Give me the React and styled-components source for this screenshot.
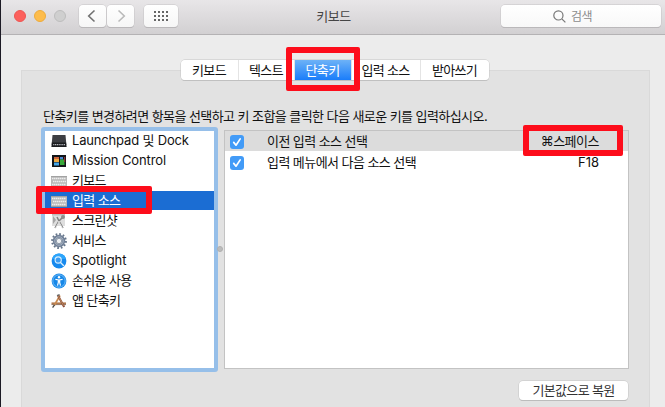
import React from "react";
import styled, { createGlobalStyle } from "styled-components";

const Global = createGlobalStyle`
  * { box-sizing: border-box; }
  body {
    margin: 0;
    overflow: hidden;
    font-family: Inter, "Noto Sans CJK KR", sans-serif;
    font-size: 13px;
    color: #111;
  }
`;

const Window = styled.div`
  width: 665px;
  height: 407px;
  overflow: hidden;
  background: #ececec;
  border-left: 1px solid #1c1a24;
`;

const Toolbar = styled.header`
  height: 35px;
  padding: 5px 4px 0 13px;
  display: flex;
  align-items: flex-start;
  background: linear-gradient(#e8e6e8, #d2d0d2);
  border-bottom: 1px solid #b4b2b4;
`;

const Lights = styled.div`
  display: flex;
  gap: 8px;
  margin: 5px 13px 0 0;
`;

const Light = styled.span`
  width: 12px;
  height: 12px;
  border-radius: 50%;
  background: ${(p) => p.$fill};
  border: 1px solid ${(p) => p.$edge};
`;

const ToolButton = styled.button`
  width: ${(p) => p.$width}px;
  height: 22px;
  margin-right: ${(p) => p.$after}px;
  padding: 0;
  display: flex;
  align-items: center;
  justify-content: center;
  border: 0;
  border-radius: 4px;
  background: linear-gradient(#fff, #f6f6f6);
  box-shadow: 0 0 0 0.5px #c6c4c6, 0 1px 0 #aeacae;
`;

const Title = styled.div`
  flex: 1;
  padding-right: 7px;
  text-align: center;
  line-height: 23px;
  letter-spacing: -0.4px;
  color: #454545;
`;

const Search = styled.div`
  width: 160px;
  height: 22px;
  display: flex;
  align-items: center;
  justify-content: center;
  gap: 5px;
  padding-right: 17px;
  border-radius: 4px;
  background: linear-gradient(#fff, #f8f8f8);
  box-shadow: 0 0 0 0.5px #c6c4c6, 0 1px 0 #aeacae;
  color: #8c8c8c;
  font-size: 12px;
  line-height: 22px;
  letter-spacing: -0.6px;
`;

const SearchLabel = styled.span`
  padding-top: 2px;
`;

const Panel = styled.main`
  position: relative;
  width: 629px;
  height: 345px;
  margin: 35px 0 0 20px;
  padding: 0 20px;
  background: #e2e2e2;
  border: 1px solid #d9d9d9;
`;

const Tabs = styled.nav`
  width: 308px;
  height: 20px;
  margin: -11px 0 0 139px;
  display: flex;
  gap: 1px;
  overflow: hidden;
  border-radius: 4px;
  background: #e4e4e4;
  box-shadow: 0 0 0 0.5px #c4c4c4, 0 1px 0 #bdbdbd;
`;

const Tab = styled.div`
  width: ${(p) => p.$width}px;
  padding-right: 1px;
  line-height: 21px;
  text-align: center;
  letter-spacing: -0.65px;
  color: ${(p) => (p.$active ? "#fff" : "#111")};
  background: ${(p) => (p.$active ? "linear-gradient(#6db2f7, #1a7dfa)" : "#fff")};
`;

const Hint = styled.p`
  margin: 25px 0 0 1px;
  height: 22px;
  line-height: 22px;
  white-space: nowrap;
  letter-spacing: -0.57px;
`;

const Columns = styled.div`
  display: flex;
  align-items: flex-start;
`;

const List = styled.ul`
  width: 177px;
  height: 245px;
  margin: 0 6px 0 -1px;
  padding: 0;
  list-style: none;
  border: 4px solid #96bfe9;
  border-radius: 3px;
  background: #fff;
`;

const Item = styled.li`
  height: ${(p) => (p.$selected ? 19 : 20)}px;
  margin-bottom: ${(p) => (p.$selected ? 1 : 0)}px;
  padding-left: 6px;
  display: flex;
  align-items: center;
  gap: 5px;
  line-height: 20px;
  white-space: nowrap;
  color: ${(p) => (p.$selected ? "#fff" : "#111")};
  background: ${(p) => (p.$selected ? "#1b6dd3" : "transparent")};
`;

const ItemLabel = styled.span`
  margin-top: -2px;
  letter-spacing: ${(p) => p.$tracking}px;
`;

const Table = styled.div`
  width: 405px;
  height: 239px;
  margin-top: 3px;
  background: #fff;
  border: 1px solid #c3c3c3;
`;

const Row = styled.div`
  height: ${(p) => (p.$shaded ? 20 : 22)}px;
  padding: 0 29px 0 5px;
  display: flex;
  align-items: center;
  line-height: 20px;
  background: ${(p) => (p.$shaded ? "#dcdcdc" : "#fff")};
`;

const Check = styled.span`
  width: 14px;
  height: 14px;
  margin: 2px 23px 0 0;
  display: flex;
  border-radius: 3px;
  background: #429bf7;
`;

const Action = styled.span`
  flex: 1;
  letter-spacing: -0.57px;
`;

const Keys = styled.span`
  letter-spacing: ${(p) => p.$tracking}px;
`;

const Restore = styled.button`
  width: 109px;
  height: 19px;
  margin: 9px 0 0 477px;
  padding: 0;
  display: block;
  border: 0;
  border-radius: 4px;
  background: #fff;
  box-shadow: 0 0 0 0.5px #c4c4c4, 0 1px 0 #b5b5b5;
  font: inherit;
  line-height: 19px;
  letter-spacing: -0.65px;
  color: #333;
`;

const SplitDot = styled.span`
  position: absolute;
  left: 195px;
  top: 175px;
  width: 6px;
  height: 6px;
  border-radius: 50%;
  background: #bcbcbc;
  border: 1px solid #b0b0b0;
`;

const Highlight = styled.span`
  position: absolute;
  left: ${(p) => p.$x}px;
  top: ${(p) => p.$y}px;
  width: ${(p) => p.$w}px;
  height: ${(p) => p.$h}px;
  border: 6px solid #fd0d1b;
  border-radius: 2px;
`;

const Glyph = styled.svg`
  display: block;
  flex: none;
`;

const Keyboard = () => (
  <>
    <rect x="0" y="3" width="16" height="11" fill="#b9b9b9" />
    <rect x="0" y="3" width="16" height="1" fill="#a2a2a2" />
    <path d="M1 5.5h14M2 8.5h13M1 11.5h14" stroke="#ededed" strokeWidth="1.6" strokeDasharray="1.5 .5" />
    <path d="M0 13.5h16" stroke="#9c9c9c" />
  </>
);

const art = {
  launchpad: (
    <>
      <path d="M1.5 2h13l.9 10H.6z" fill="#3d3e43" />
      <path d="M.9 9.5h14.2l.5 4.5H.4z" fill="#1b1c1f" />
      <path d="M2.2 11.6h11.8" stroke="#b8bac0" strokeWidth="1.2" strokeDasharray="1.2 .6" />
    </>
  ),
  mission: (
    <>
      <rect x="1" y="2" width="14" height="12" fill="#111418" />
      <rect x="3" y="4" width="5" height="2" fill="#c9623c" />
      <rect x="3" y="6" width="5" height="3" fill="#eea940" />
      <rect x="3" y="9.5" width="5" height="3" fill="#46a6e7" />
      <rect x="9" y="4" width="3" height="2.5" fill="#4a84d1" />
      <rect x="9" y="6.5" width="4.5" height="5.5" fill="#38a83a" />
      <rect x="13" y="4" width="1.2" height="5" fill="#8f3438" />
    </>
  ),
  keyboard: <Keyboard />,
  screenshot: (
    <>
      <rect x="1" y="1" width="13" height="12" fill="#dedede" />
      <path d="M1 1h13v1.5H1z" fill="#bdbdbd" />
      <path d="M2 3l3 4-3 4z" fill="#a5a5a5" />
      <path d="M6 4l2 4 4 7M12 4L8 8l-4 7" stroke="#808080" strokeWidth="1.5" fill="none" />
      <path d="M7.4 8l4 7M8.6 8l-4 7" stroke="#f0f0f0" strokeWidth=".8" />
      <circle cx="12" cy="4" r="2" fill="#8d8d8d" />
    </>
  ),
  gear: (
    <>
      <circle cx="8" cy="8" r="6.8" fill="none" stroke="#66768b" strokeWidth="2.2" strokeDasharray="1.7 1.86" />
      <circle cx="8" cy="8" r="4.6" fill="none" stroke="#718097" strokeWidth="3.2" />
      <circle cx="8" cy="8" r="4.2" fill="none" stroke="#a9b6c5" strokeWidth="1" />
      <circle cx="8" cy="8" r="2.7" fill="#eef1f4" stroke="#66758a" strokeWidth=".7" />
    </>
  ),
  spotlight: (
    <>
      <circle cx="8" cy="8" r="7.4" fill="#1689ee" />
      <path d="M1 6a7.2 7.2 0 0 1 14 0z" fill="#2da5fb" />
      <circle cx="7.2" cy="7" r="3.1" fill="#3b9cf2" stroke="#d9efff" strokeWidth="1.1" />
      <path d="M9.5 9.4l3 3" stroke="#d9efff" strokeWidth="1.4" strokeLinecap="round" />
    </>
  ),
  access: (
    <>
      <circle cx="8" cy="8" r="7.4" fill="#1687e8" />
      <circle cx="8" cy="8" r="6.2" fill="none" stroke="#84c5f8" strokeWidth=".8" />
      <circle cx="8" cy="4.2" r="1.2" fill="#fff" />
      <path d="M4.4 6.4L8 7l3.6-.6M8 6.8v2.4M7.3 7v2.6L6.5 12.6M8.7 7v2.6l.8 3" stroke="#fff" strokeWidth="1.2" fill="none" />
    </>
  ),
  apps: (
    <>
      <path d="M.5 10.4h14.5" stroke="#b17a50" strokeWidth="2" />
      <path d="M.5 11.6h14.5" stroke="#6d5140" strokeWidth=".7" />
      <path d="M9 2.5L3.2 12.5" stroke="#c98a50" strokeWidth="1.7" />
      <path d="M3.5 11.8L1.6 14.6" stroke="#444" strokeWidth="1.2" />
      <path d="M7 2.5l6.2 11.5" stroke="#8c4a38" strokeWidth="2" />
      <path d="M7.4 3.2l5.2 9.5" stroke="#d3ad74" strokeWidth=".7" />
      <path d="M6 2.6l2.6-1" stroke="#666" strokeWidth="1.3" />
    </>
  ),
};

const items = [
  ["launchpad", "Launchpad 및 Dock", -0.17],
  ["mission", "Mission Control", -0.12],
  ["keyboard", "키보드", -0.65],
  ["keyboard", "입력 소스", -0.65],
  ["screenshot", "스크린샷", -0.75],
  ["gear", "서비스", -0.65],
  ["spotlight", "Spotlight", 0],
  ["access", "손쉬운 사용", -0.65],
  ["apps", "앱 단축키", -0.65],
];

const tabs = [
  ["키보드", 57],
  ["텍스트", 55],
  ["단축키", 56],
  ["입력 소스", 68],
  ["받아쓰기", 68],
];

const shortcuts = [
  ["이전 입력 소스 선택", "⌘스페이스", -0.5],
  ["입력 메뉴에서 다음 소스 선택", "F18", 0],
];

export default function App() {
  return (
    <>
      <Global />
      <Window>
        <Toolbar>
          <Lights>
            <Light $fill="#fc605c" $edge="#ee5552" />
            <Light $fill="#fdbc4b" $edge="#edab3c" />
            <Light $fill="#cfcfcf" $edge="#bdbdbd" />
          </Lights>
          <ToolButton $width={27} $after={1}>
            <Glyph width="27" height="22" fill="none" stroke="#727272" strokeWidth="1.6">
              <path d="M15.5 5.5L9.7 11l5.8 5.5" />
            </Glyph>
          </ToolButton>
          <ToolButton $width={27} $after={10}>
            <Glyph width="27" height="22" fill="none" stroke="#bababa" strokeWidth="1.6">
              <path d="M11.5 5.5l5.8 5.5-5.8 5.5" />
            </Glyph>
          </ToolButton>
          <ToolButton $width={34} $after={-5}>
            <Glyph width="34" height="22" fill="#666">
              {[6, 10, 14].map((y) =>
                [10, 14, 18, 22].map((x) => <rect key={`${x}-${y}`} x={x} y={y} width="2" height="2" />)
              )}
            </Glyph>
          </ToolButton>
          <Title>키보드</Title>
          <Search>
            <Glyph width="13" height="13" fill="none" stroke="#777" strokeWidth="1.2">
              <circle cx="5.4" cy="5.4" r="4.6" />
              <path d="M8.8 8.8l3.6 3.6" />
            </Glyph>
            <SearchLabel>검색</SearchLabel>
          </Search>
        </Toolbar>
        <Panel>
          <Tabs>
            {tabs.map(([label, width]) => (
              <Tab key={label} $width={width} $active={label === "단축키"}>{label}</Tab>
            ))}
          </Tabs>
          <Hint>단축키를 변경하려면 항목을 선택하고 키 조합을 클릭한 다음 새로운 키를 입력하십시오.</Hint>
          <Columns>
            <List>
              {items.map(([icon, label, tracking]) => (
                <Item key={label} $selected={label === "입력 소스"}>
                  <Glyph width="16" height="16" viewBox="0 0 16 16">{art[icon]}</Glyph>
                  <ItemLabel $tracking={tracking}>{label}</ItemLabel>
                </Item>
              ))}
            </List>
            <Table>
              {shortcuts.map(([action, keys, tracking], i) => (
                <Row key={action} $shaded={i === 0}>
                  <Check>
                    <Glyph width="14" height="14" fill="none" stroke="#fff" strokeWidth="1.7" strokeLinecap="round" strokeLinejoin="round">
                      <path d="M3.7 7.4l2.3 2.8 4.2-6.3" />
                    </Glyph>
                  </Check>
                  <Action>{action}</Action>
                  <Keys $tracking={tracking}>{keys}</Keys>
                </Row>
              ))}
            </Table>
          </Columns>
          <Restore>기본값으로 복원</Restore>
          <SplitDot />
          <Highlight $x={264} $y={-24} $w={74} $h={44} />
          <Highlight $x={14} $y={115} $w={116} $h={28} />
          <Highlight $x={501} $y={54} $w={100} $h={31} />
        </Panel>
      </Window>
    </>
  );
}
